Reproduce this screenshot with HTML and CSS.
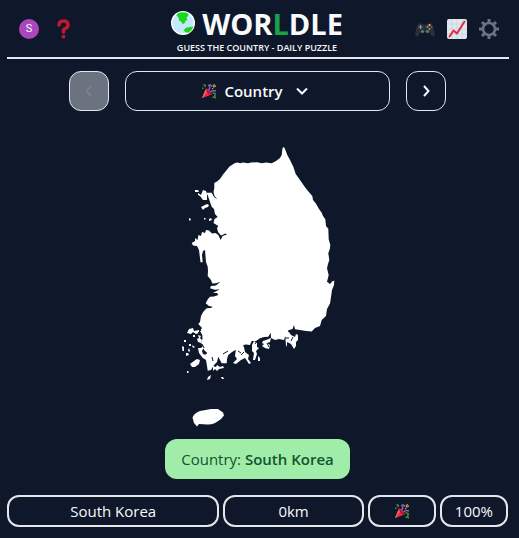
FILE: index.html
```html
<!DOCTYPE html>
<html lang="en">
<head>
<meta charset="utf-8">
<meta name="viewport" content="width=device-width, initial-scale=1">
<title>Worldle</title>
<link rel="stylesheet" href="styles.css">
</head>
<body>
<svg class="defs" aria-hidden="true">
  <symbol id="party" viewBox="0 0 32 32">
    <path fill="#dd2e44" d="M2 30 10 11q4 0 7 4t5 8z"/>
    <path fill="#ff5a6e" d="m2 30 8-19 3 4-8 14z"/>
    <path fill="#a3142e" d="m10 11 12 12-3 1Q11 19 10 11z"/>
    <path fill="none" stroke="#4f8f3f" stroke-width="3" d="M5 3q5 1 3 5M23 20q7-1 5 4t2 6"/>
    <path fill="none" stroke="#8465b5" stroke-width="3" d="M15 14q5-4 0-11M19 18q4-5 11-2M18 3l4 4"/>
    <path fill="none" stroke="#e9b44c" stroke-width="2" d="m24 5 3-2 2 4-4 1zM22 12l3-2"/>
    <path fill="#4f8f3f" d="M2 9h3v3H2zM23 27h3v3h-3z"/>
  </symbol>
</svg>
<div class="page">
  <header class="header">
    <nav class="tools account" aria-label="Account">
      <button class="avatar" type="button">S</button>
      <button class="tool" type="button" aria-label="Help">
        <svg viewBox="0 0 20 20"><path d="M6 6q0-4 4.500-4T15 6q0 2-2.500 3.400T10.500 13" fill="none" stroke="#be1931" stroke-width="3.600" stroke-linecap="round"/><circle cx="10.500" cy="17.700" r="1.900" fill="#be1931"/></svg>
      </button>
    </nav>
    <div class="brand">
      <h1 class="title">
        <svg class="globe" viewBox="0 0 24 24" aria-hidden="true"><circle cx="12" cy="12" r="11.300" fill="#c4e9ff" stroke="#fff" stroke-width="1.400"/><path fill="#19d819" d="M6.500 2.500Q12 0 17.500 2.800L17 5l-1.500 1.500 1 2-2 1.500-1 2.500-2 .5-1-2-2.500-1.500-.5-3-2-2zM22.500 15.500q-1.500 4.500-5 6.300l-3-.5-2-2 2.500-2.500 4-.8z"/></svg>
        <span>WOR<span class="accent">L</span>DLE</span>
      </h1>
      <p class="subtitle">GUESS THE COUNTRY - DAILY PUZZLE</p>
    </div>
    <nav class="tools game-tools" aria-label="Game">
      <button class="tool" type="button" aria-label="Games">
        <svg viewBox="0 0 20 20"><path fill="#292f33" d="M3 5q3-1.500 5 .5h4q2-2 5-.5 2 3 3 11.500-2 2-4-.5l-2-3H6l-2 3q-2 2.500-4 .5Q1 8 3 5z"/><path stroke="#8899a6" stroke-width="1.200" d="M3.500 8h4m-2-2v4"/><circle cx="7.500" cy="12.500" r="1.600" fill="#66757f"/><circle cx="12.500" cy="12.500" r="1.600" fill="#66757f"/><circle cx="14.500" cy="6" r="1" fill="#ffcc4d"/><circle cx="16.500" cy="8" r="1" fill="#dd2e44"/><circle cx="12.500" cy="8" r="1" fill="#55acee"/><circle cx="14.500" cy="10" r="1" fill="#77b255"/></svg>
      </button>
      <button class="tool" type="button" aria-label="Statistics">
        <svg viewBox="0 0 20 20"><rect width="20" height="20" rx="2" fill="#e1e8ed"/><path d="M0 5h20M0 10h20M0 15h20M5 0v20M10 0v20M15 0v20" stroke="#ccd6dd" stroke-width="1"/><path d="m2.500 17.500 4-6 3.500 3L17.500 2.500" fill="none" stroke="#dd2e44" stroke-width="2" stroke-linecap="round" stroke-linejoin="round"/></svg>
      </button>
      <button class="tool" type="button" aria-label="Settings">
        <svg viewBox="0 0 20 20"><circle cx="10" cy="10" r="6" fill="none" stroke="#66757f" stroke-width="2.600"/><path d="M10 0v4M10 16v4M0 10h4M16 10h4M3 3l2.500 2.500M14.500 14.500 17 17M17 3l-2.500 2.500M5.500 14.500 3 17" stroke="#66757f" stroke-width="3"/></svg>
      </button>
    </nav>
  </header>
  <main class="game">
    <div class="rounds">
      <button class="step" type="button" aria-label="Previous round" disabled><svg viewBox="0 0 16 16"><path d="M10 3 5.500 8l4.500 5"/></svg></button>
      <button class="picker" type="button">
        <svg class="party" aria-hidden="true"><use href="#party"/></svg>
        <span>Country</span>
        <svg class="caret" viewBox="0 0 16 16" aria-hidden="true"><path d="m3 5.500 5 5 5-5"/></svg>
      </button>
      <button class="step" type="button" aria-label="Next round"><svg viewBox="0 0 16 16"><path d="m6 3 4.500 5L6 13"/></svg></button>
    </div>
    <svg class="map" viewBox="175 140 165 288" role="img" aria-label="Outline of the country">
      <path d="M214.300 183L217 181.500 220 179 223 174.500 226.700 170 229.500 166.500 235 163 238 162.500 240 163.200 243 162.400 248 163.200 251 162.600 257 162.300 262 163.300 266 162.600 271.700 163.300 276 161 280 158 281.700 155 282.500 148 284 147 285 149 287.300 155 290 160 293.300 166.700 295.700 174 300 180 305 187.300 308 191 312.300 196 313 200 315.700 203.300 319 209 321.700 212.700 323 216 325.300 219.300 326 226 328.300 228.700 328.700 239.300 330.300 245 329.800 249 328.300 253.300 329.300 260 328 264 327 268.300 328.700 275 327 281.700 330 284 332 281.500 334.300 280.500 334 285 332 290 331 297 330 303.500 327 309 326 316 321.700 320 320 326 315 328 311.700 331.500 306 331 300 330 295 329.300 294 325 292.500 329 287.700 330.500 289 333 285 336.700 284 340 279 339 275 340 271 338 270.700 332.700 268.300 336.700 264 337 260 338.300 256 341 251.700 341 250 345 246 344.500 243.300 345 244 349.300 240 348 236.700 349.300 232 352 228.300 355 227 359 226.700 363.300 221.700 363.300 218.300 356.700 217 362 214 365 211 370 207.700 370.700 207 366 206 360 202 357.500 205 355 207.300 353 204 350 203.500 346.700 201 343 202.500 339 202.300 335 200 331 202 328 198.300 324 200 322 201 316 203.300 311.700 206.700 308.300 211 308 212.700 306.700 209 306 205.700 303.300 208 299 210 296.700 214 296.500 218.300 295 217 293 213 293 219.700 289.300 215 289.800 210 288.300 211 286 216 285.500 220.300 281.700 216 283.300 212.300 283.500 211 280 207.700 276 208 271 207.700 266.700 206 262 205 250 203 251 202 255 202.700 262.300 200.500 262.300 199 250 197 246 193 245.500 191.700 243 195 241 195 238 197.500 240 198.500 235 201 236 202 232 205 233 206 230 209 230.500 212 233.500 215.500 233 218.300 235 220.700 240 222.500 236 227 234.500 225.500 233.500 221 235.500 218 232 217 228 218.300 226 213.500 223 214.500 219 217.700 217 215 214 214 209 211.700 206.700 210 202 208 196 206.500 192.700 211.700 192.700 214 197 217.500 199.500 214.500 196 213.500 192 214.300 188z"/>
      <path d="M195 190l3 0 1 2-4 0zM198 193l3 2 2-5 3 1 1 3 0 6-4 0-3-4-2-1zM201 207l2-1 4-2 2 1-1 2-3 1-2 2zM189 218l2 1-1 2-1-1zM204 218l1.500 0 0 1.500-1.500 0zM209 219l2-1 1 2-3 1z"/>
      <path d="M189 329l4-1 1 3 5-1 0 3-3 1-3-2-2 2-4-1 1-2zM198 335l3 1-1 2 2 2-1 3-3-1-1-3 2-1zM182 346l2 1 0 4-1.500 0zM184 340l2 0 0 2-2 0zM186 353l2 0 1 2-3 1zM189 344l2 0 0 2-2 0zM198 348l3 0 2-2 3 2-3 1-1 2 1 3 3 1 1 2-5 0-3-4zM190 364l4-3 3-2 3 1-1 4-4 3-3 0zM187 371l1.500 0 0 2-1.500 0zM208 377l3-2-1 4-3 1zM189 348l1 3-1 1-1-2zM192 345l3 2-2 1zM193 335l2 0 0 2-2 0z"/>
      <path d="M213 366l3 1 1-2 3 2 3-1 1 2-5 1-2 2-2-2-2 2zM221 377l2 0 1 2-2 0zM236 348l8-1 1 5 4 3-1 4 3 4-2 1-4-6-4 2-5 4-3-1 4-4-2-3zM252 345l2-4 3 2 0 4 2 1-3 3 1 3-2 6-2 0 1-7-2-2zM258 356l2 2 0 3-2 0zM263 341l3-1 5-2-1 4-3 1 3 2-1 4-4-1-3-2 2-2-2-1zM285 334l4-2 2 3 4 2 1-3 2 1 0 5-2 2 0 4-2 3-3-5-4-2 0 5-1-2z"/>
      <path d="M192.500 417.500Q194 413 200 411L211 409 218 409 223 412.500 224 415.500 221 419Q214 425 207 424.500L199 424 197 426.500 194 423z"/>
      <path class="water" d="M223 354l5-3M238 351l3 2M244 352l-3 3M201 330l-3 3M202 344l2 4M212 357l1 4M267 343l2 4M258 340l-3 4M285 338l4 0M293 337l-2 4"/>
    </svg>
    <p class="answer">Country: <strong>South Korea</strong></p>
    <div class="guess">
      <div class="cell name">South Korea</div>
      <div class="cell distance">0km</div>
      <div class="cell"><svg class="party" role="img" aria-label="Correct"><use href="#party"/></svg></div>
      <div class="cell">100%</div>
    </div>
  </main>
</div>
</body>
</html>
```
FILE: styles.css
```css
* {
  box-sizing: border-box;
}

body {
  margin: 0;
  min-height: 100vh;
  background: #0f172a;
  color: #f8fafc;
  font: 15px/24px "Open Sans", "Noto Sans", sans-serif;
}

h1,
p {
  margin: 0;
}

button {
  padding: 0;
  border: 0;
  background: none;
  color: inherit;
  font: inherit;
}

svg {
  display: block;
}

.defs {
  position: absolute;
  width: 0;
  height: 0;
}

.page {
  padding: 0 10px 0 7px;
}

.header {
  display: flex;
  align-items: center;
  justify-content: space-between;
  height: 59px;
  padding: 0 10px 0 12px;
  border-bottom: 2px solid #e5e7eb;
}

.tools {
  display: flex;
  flex: 1;
  gap: 12px;
}

.account {
  gap: 14px;
}

.game-tools {
  justify-content: flex-end;
}

.tool,
.avatar {
  width: 20px;
  height: 20px;
}

.tool svg {
  width: 20px;
  height: 20px;
}

.avatar {
  border-radius: 50%;
  background: #ab47bc;
  font: 11px/20px Roboto, sans-serif;
}

.brand {
  margin-right: 4px;
  text-align: center;
}

.title {
  display: flex;
  align-items: center;
  justify-content: center;
  gap: 7px;
  padding-top: 2px;
  font-size: 29px;
  line-height: 36px;
  font-weight: 700;
}

.globe {
  width: 24px;
  height: 24px;
  margin-bottom: 1px;
}

.accent {
  color: #16a34a;
}

.subtitle {
  font-size: 9px;
  line-height: 12px;
  font-weight: 600;
}

.game {
  display: flex;
  flex-direction: column;
  align-items: center;
  padding-right: 1px;
}

.rounds {
  display: flex;
  gap: 16px;
  width: 100%;
  max-width: 377px;
  margin: 12px 0 29px;
}

.step,
.picker {
  display: flex;
  align-items: center;
  justify-content: center;
  height: 40px;
  border: 1px solid #e2e8f0;
  border-radius: 12px;
}

.step {
  width: 40px;
}

.step:disabled {
  background: #6b7280;
  color: #808080;
}

.picker {
  flex: 1;
  gap: 7px;
  padding-right: 4px;
  font-weight: 600;
}

.step svg,
.caret {
  width: 16px;
  height: 16px;
  fill: none;
  stroke: currentColor;
  stroke-width: 2;
}

.caret {
  margin-left: 4px;
}

.party {
  width: 16px;
  height: 16px;
}

.map {
  width: 165px;
  height: 288px;
  fill: #fff;
}

.water {
  fill: none;
  stroke: #0f172a;
  stroke-width: 1;
}

.answer {
  margin: 11px 0 16px;
  padding: 8px 16px;
  border-radius: 12px;
  background: #9feda9;
  color: #14532d;
}

.answer strong {
  font-weight: 600;
}

.guess {
  display: grid;
  grid-template-columns: repeat(7, 1fr);
  gap: 4px;
  width: 100%;
}

.cell {
  display: flex;
  align-items: center;
  justify-content: center;
  height: 32px;
  border: 2px solid #e5e7eb;
  border-radius: 12px;
}

.name {
  grid-column: span 3;
}

.distance {
  grid-column: span 2;
}
```
